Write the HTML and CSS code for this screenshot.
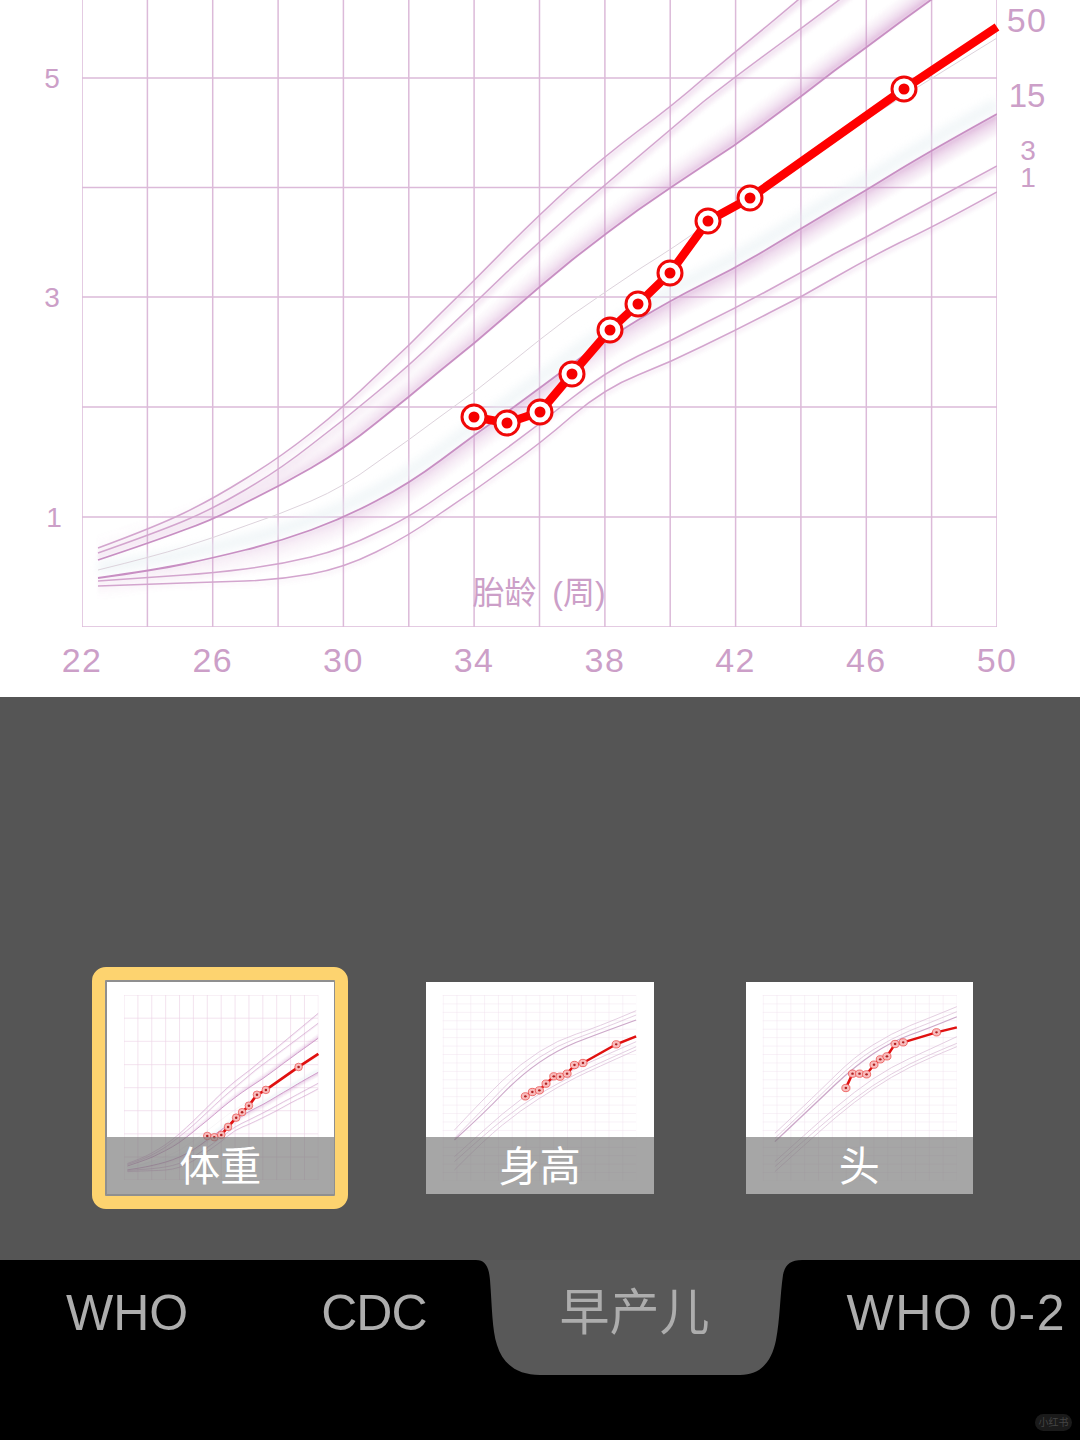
FILE: index.html
```html
<!DOCTYPE html>
<html lang="zh">
<head>
<meta charset="utf-8">
<title>早产儿 生长曲线</title>
<link rel="stylesheet" href="styles.css">
</head>
<body>
<main class="page">
  <svg class="chart" viewBox="0 0 1080 697" aria-label="体重曲线">
    <defs>
      <filter id="soft" x="-20%" y="-20%" width="140%" height="140%"><feGaussianBlur stdDeviation="5"/></filter>
      <filter id="soft2" x="-5%" y="-5%" width="110%" height="110%"><feGaussianBlur stdDeviation="1.2"/></filter>
      <linearGradient id="fade" gradientUnits="userSpaceOnUse" x1="98" y1="0" x2="997" y2="0">
        <stop offset="0" stop-color="#cf94ca" stop-opacity=".22"/>
        <stop offset=".45" stop-color="#cf94ca" stop-opacity=".7"/>
        <stop offset="1" stop-color="#cb8cc6" stop-opacity="1"/>
      </linearGradient>
      <clipPath id="plot"><rect x="82" y="-253" width="915" height="880"/></clipPath>
      <path id="pa" d="M98 548 Q155 527 184 513 Q213 499 245 479 Q278 459 311 433 Q344 407 376 376 Q409 346 441 313 Q474 281 507 247 Q540 214 572 185 Q605 156 638 131 Q671 107 703 79 Q736 51 767 26 Q798 0 897 -83 L997 -167"/>
      <path id="pb" d="M98 553 Q155 533 184 521 Q213 509 245 490 Q278 471 311 445 Q344 420 376 393 Q409 366 441 335 Q474 304 507 272 Q540 241 572 213 Q605 185 638 157 Q671 129 703 102 Q736 76 788 38 Q840 0 997 -120"/>
      <path id="pc" d="M98 560 Q155 541 184 530 Q213 520 245 503 Q278 487 311 468 Q344 449 376 423 Q409 397 441 370 Q474 344 507 315 Q540 286 572 260 Q605 234 638 210 Q671 187 703 166 Q736 145 769 120 Q802 96 834 71 Q867 47 899 23 Q931 0 997 -48"/>
      <path id="pm" d="M98 570 Q155 556 184 547 Q213 538 245 526 Q278 515 311 501 Q344 487 376 463 Q409 440 441 416 Q474 393 507 366 Q540 339 572 315 Q605 292 641 268 Q678 245 707 224 Q736 204 820 149 Q904 95 997 38"/>
      <path id="pd" d="M98 578 Q155 570 184 564 Q213 558 245 550 Q278 542 311 530 Q344 518 376 501 Q409 484 441 460 Q474 435 507 412 Q540 388 572 364 Q605 340 638 320 Q671 300 703 284 Q736 268 769 248 Q802 228 834 209 Q867 190 899 170 Q932 150 997 114"/>
      <path id="pe" d="M98 581 Q155 577 184 575 Q213 573 245 569 Q278 565 311 557 Q344 549 376 533 Q409 518 441 495 Q474 473 507 448 Q540 424 572 398 Q605 372 638 356 Q671 341 703 324 Q736 308 769 290 Q802 272 834 254 Q867 237 899 219 Q932 201 997 166"/>
      <path id="pf" d="M98 586 Q155 584 184 583 Q213 582 245 581 Q278 580 311 574 Q344 568 376 552 Q409 536 441 513 Q474 491 507 467 Q540 444 572 416 Q605 388 638 375 Q671 362 703 346 Q736 330 769 313 Q802 297 834 278 Q867 259 899 243 Q932 228 997 192"/>
      <g id="curves" clip-path="url(#plot)">
        <path class="grid" d="M82 -253V627M147.4 -253V627M212.7 -253V627M278.1 -253V627M343.4 -253V627M408.8 -253V627M474.1 -253V627M539.5 -253V627M604.9 -253V627M670.2 -253V627M735.6 -253V627M800.9 -253V627M866.3 -253V627M931.6 -253V627M997 -253V627"/>
        <path class="grid" d="M82 -253H997M82 -143H997M82 -33H997M82 78H997M82 187.5H997M82 297H997M82 407H997M82 517H997M82 627H997"/>
        <use href="#pd" class="shade-pale"/>
        <g class="band" stroke="url(#fade)" filter="url(#soft2)">
          <use href="#pc" transform="translate(0 -2)" opacity=".5"/>
          <use href="#pc" transform="translate(0 -5)" opacity=".38"/>
          <use href="#pc" transform="translate(0 -8)" opacity=".29"/>
          <use href="#pc" transform="translate(0 -11)" opacity=".22"/>
          <use href="#pc" transform="translate(0 -14)" opacity=".16"/>
          <use href="#pc" transform="translate(0 -17)" opacity=".11"/>
          <use href="#pc" transform="translate(0 -20)" opacity=".07"/>
          <use href="#pc" transform="translate(0 -23)" opacity=".04"/>
          <use href="#pd" transform="translate(0 2)" opacity=".5"/>
          <use href="#pd" transform="translate(0 5)" opacity=".38"/>
          <use href="#pd" transform="translate(0 8)" opacity=".29"/>
          <use href="#pd" transform="translate(0 11)" opacity=".22"/>
          <use href="#pd" transform="translate(0 14)" opacity=".16"/>
          <use href="#pd" transform="translate(0 17)" opacity=".11"/>
          <use href="#pd" transform="translate(0 20)" opacity=".06"/>
          <use href="#pa" transform="translate(0 2)" opacity=".24"/>
          <use href="#pa" transform="translate(0 5)" opacity=".16"/>
          <use href="#pa" transform="translate(0 8)" opacity=".09"/>
          <use href="#pb" transform="translate(0 2)" opacity=".24"/>
          <use href="#pb" transform="translate(0 5)" opacity=".16"/>
          <use href="#pb" transform="translate(0 8)" opacity=".09"/>
          <use href="#pe" transform="translate(0 2)" opacity=".18"/>
          <use href="#pe" transform="translate(0 5)" opacity=".1"/>
          <use href="#pf" transform="translate(0 2)" opacity=".14"/>
          <use href="#pf" transform="translate(0 5)" opacity=".07"/>
        </g>
        <use href="#pm" class="thin"/>
        <use href="#pa" class="curve"/>
        <use href="#pb" class="curve"/>
        <use href="#pc" class="curve curve-bold"/>
        <use href="#pd" class="curve curve-bold"/>
        <use href="#pe" class="curve"/>
        <use href="#pf" class="curve"/>
      </g>
      <g id="node">
        <circle class="node-ring" r="12"/>
        <circle class="node-dot" r="5.5"/>
      </g>
      <g id="thumb-node">
        <circle class="tn-ring" r="18"/>
        <circle class="tn-dot" r="6"/>
      </g>
      <g id="mini-node">
        <circle class="mn-ring" r="11"/>
        <circle class="mn-dot" r="3.5"/>
      </g>
      <pattern id="fine" patternUnits="userSpaceOnUse" width="37.43" height="25.3" x="88" y="75">
        <path class="fine-line" d="M0 0H37.43M0 0V25.3"/>
      </pattern>
      <pattern id="fine2" patternUnits="userSpaceOnUse" width="37.43" height="25.3" x="952" y="75">
        <path class="fine-line" d="M0 0H37.43M0 0V25.3"/>
      </pattern>
    </defs>

    <use href="#curves"/>
    <polyline class="red" points="474,417 507,423 540,412 572,374 610,330 638,304 670,273 708,221 750,198 904,89 997,27"/>
    <use href="#node" x="474" y="417"/>
    <use href="#node" x="507" y="423"/>
    <use href="#node" x="540" y="412"/>
    <use href="#node" x="572" y="374"/>
    <use href="#node" x="610" y="330"/>
    <use href="#node" x="638" y="304"/>
    <use href="#node" x="670" y="273"/>
    <use href="#node" x="708" y="221"/>
    <use href="#node" x="750" y="198"/>
    <use href="#node" x="904" y="89"/>

    <text class="lbl lbl-y" x="52" y="88">5</text>
    <text class="lbl lbl-y" x="52" y="307">3</text>
    <text class="lbl lbl-y" x="54" y="527">1</text>
    <text class="lbl lbl-x" x="82" y="672">22</text>
    <text class="lbl lbl-x" x="212.7" y="672">26</text>
    <text class="lbl lbl-x" x="343.4" y="672">30</text>
    <text class="lbl lbl-x" x="474.1" y="672">34</text>
    <text class="lbl lbl-x" x="604.9" y="672">38</text>
    <text class="lbl lbl-x" x="735.6" y="672">42</text>
    <text class="lbl lbl-x" x="866.3" y="672">46</text>
    <text class="lbl lbl-x" x="997" y="672">50</text>
    <text class="lbl lbl-x" x="1027" y="32">50</text>
    <text class="lbl lbl-r" x="1027" y="107">15</text>
    <text class="lbl lbl-s" x="1028" y="160">3</text>
    <text class="lbl lbl-s" x="1028" y="187">1</text>
    <text class="lbl lbl-t" x="539" y="604">胎龄 (周)</text>
  </svg>

  <section class="thumbs">
    <figure class="thumb thumb-on">
      <svg class="thumb-art" viewBox="2 -315 1071 1008" preserveAspectRatio="none">
        <use href="#curves"/>
        <polyline class="tn-red" points="474,417 507,423 540,412 572,374 610,330 638,304 670,273 708,221 750,198 904,89 997,27"/>
        <use href="#thumb-node" x="474" y="417"/>
        <use href="#thumb-node" x="507" y="423"/>
        <use href="#thumb-node" x="540" y="412"/>
        <use href="#thumb-node" x="572" y="374"/>
        <use href="#thumb-node" x="610" y="330"/>
        <use href="#thumb-node" x="638" y="304"/>
        <use href="#thumb-node" x="670" y="273"/>
        <use href="#thumb-node" x="708" y="221"/>
        <use href="#thumb-node" x="750" y="198"/>
        <use href="#thumb-node" x="904" y="89"/>
      </svg>
      <figcaption class="thumb-cap">体重</figcaption>
    </figure>

    <figure class="thumb">
      <svg class="thumb-art" viewBox="43 36 616 636" preserveAspectRatio="none">
        <rect x="88" y="75" width="524" height="557" fill="url(#fine)"/>
        <path class="mini" d="M120 480 Q200 385 250 332 Q300 280 350 245 Q400 210 450 192 Q500 175 612 122"/>
        <path class="mini" d="M120 505 Q200 415 250 357 Q300 300 350 262 Q400 225 450 205 Q500 185 612 135"/>
        <path class="mini mini-bold" d="M120 510 Q200 430 250 372 Q300 315 350 277 Q400 240 450 217 Q500 195 612 150"/>
        <path class="mini" d="M120 560 Q200 480 250 432 Q300 385 350 352 Q400 320 450 295 Q500 270 612 215"/>
        <path class="mini" d="M120 575 Q200 495 250 450 Q300 405 350 372 Q400 340 450 312 Q500 285 612 230"/>
        <path class="mini" d="M120 600 Q200 510 250 465 Q300 420 350 385 Q400 350 450 322 Q500 295 612 240"/>
        <polyline class="mn-red" points="312,379 331,366 350,361 368,341 389,319 406,320 425,311 445,285 468,279 558,223 612,199"/>
        <use href="#mini-node" x="312" y="379"/>
        <use href="#mini-node" x="331" y="366"/>
        <use href="#mini-node" x="350" y="361"/>
        <use href="#mini-node" x="368" y="341"/>
        <use href="#mini-node" x="389" y="319"/>
        <use href="#mini-node" x="406" y="320"/>
        <use href="#mini-node" x="425" y="311"/>
        <use href="#mini-node" x="445" y="285"/>
        <use href="#mini-node" x="468" y="279"/>
        <use href="#mini-node" x="558" y="223"/>
      </svg>
      <figcaption class="thumb-cap">身高</figcaption>
    </figure>

    <figure class="thumb">
      <svg class="thumb-art" viewBox="907 36 615 636" preserveAspectRatio="none">
        <rect x="952" y="75" width="525" height="557" fill="url(#fine2)"/>
        <path class="mini" d="M985 490 Q1100 370 1150 315 Q1200 260 1250 225 Q1300 190 1350 167 Q1400 145 1477 110"/>
        <path class="mini" d="M985 505 Q1100 385 1150 330 Q1200 275 1250 240 Q1300 205 1350 182 Q1400 160 1477 125"/>
        <path class="mini mini-bold" d="M985 515 Q1100 395 1150 342 Q1200 290 1250 252 Q1300 215 1350 195 Q1400 175 1477 140"/>
        <path class="mini" d="M985 575 Q1100 460 1150 412 Q1200 365 1250 327 Q1300 290 1350 265 Q1400 240 1477 200"/>
        <path class="mini" d="M985 590 Q1100 475 1150 430 Q1200 385 1250 347 Q1300 310 1350 282 Q1400 255 1477 220"/>
        <path class="mini" d="M985 605 Q1100 490 1150 442 Q1200 395 1250 357 Q1300 320 1350 292 Q1400 265 1477 230"/>
        <polyline class="mn-red" points="1177,354 1195,311 1214,311 1233,313 1253,284 1270,268 1288,259 1310,222 1332,217 1422,187 1477,172"/>
        <use href="#mini-node" x="1177" y="354"/>
        <use href="#mini-node" x="1195" y="311"/>
        <use href="#mini-node" x="1214" y="311"/>
        <use href="#mini-node" x="1233" y="313"/>
        <use href="#mini-node" x="1253" y="284"/>
        <use href="#mini-node" x="1270" y="268"/>
        <use href="#mini-node" x="1288" y="259"/>
        <use href="#mini-node" x="1310" y="222"/>
        <use href="#mini-node" x="1332" y="217"/>
        <use href="#mini-node" x="1422" y="187"/>
      </svg>
      <figcaption class="thumb-cap">头</figcaption>
    </figure>
  </section>

  <nav class="tabs">
    <svg class="notch" viewBox="0 0 1080 120" aria-hidden="true">
      <path class="notch-fill" d="M476 0 C486 0 489 8 490 20 C492 45 492 70 497 85 C503 105 518 115 540 115 H740 C762 115 772 100 776 80 C780 60 780 35 783 15 C785 5 790 0 802 0 Z"/>
    </svg>
    <span class="tab">WHO</span>
    <span class="tab tab-tight">CDC</span>
    <span class="tab">早产儿</span>
    <span class="tab tab-wide">WHO 0-2</span>
    <span class="mark">小红书</span>
  </nav>
</main>
</body>
</html>
```

FILE: styles.css
```css
* { box-sizing: border-box; }

html, body {
  margin: 0;
  background: #555555;
}

.page {
  width: 1080px;
  height: 1440px;
  overflow: hidden;
  display: flex;
  flex-direction: column;
  font-family: "Liberation Sans", "Noto Sans CJK SC", sans-serif;
}

/* main chart */
.chart {
  display: block;
  width: 1080px;
  height: 697px;
  flex: none;
  background: #ffffff;
}

.grid { fill: none; stroke: var(--grid-c, #dcbad9); stroke-width: var(--grid-w, 1.5); }
.curve { fill: none; stroke: #d3a5ce; stroke-width: var(--curve-w, 1.5); }
.curve-bold { stroke: #c88fc3; stroke-width: var(--curve-b, 1.8); }
.thin { fill: none; stroke: #ddd3dc; stroke-width: 1; }
.band { fill: none; stroke-width: 3.2; }
.shade-pale { fill: none; stroke: #e6eff3; stroke-width: 12; opacity: .55; filter: url(#soft); transform: translate(0, -10px); }

.red {
  fill: none;
  stroke: #ff0000;
  stroke-width: 8.5;
  stroke-linejoin: round;
}

.node-ring { fill: #ffffff; stroke: #f00808; stroke-width: 3; }
.node-dot { fill: #f50000; }

.lbl { fill: #cc9fc8; text-anchor: middle; }
.lbl-x { font-size: 34px; letter-spacing: 1.4px; }
.lbl-r { font-size: 33px; }
.lbl-y { font-size: 28px; }
.lbl-s { font-size: 28px; }
.lbl-t { font-size: 32px; word-spacing: 7px; }

/* thumbnails */
.thumbs {
  flex: none;
  height: 563px;
  padding: 285px 0 0 106.5px;
  display: flex;
  align-items: flex-start;
  gap: 92px;
}

.thumb {
  position: relative;
  width: 227.5px;
  height: 212px;
  margin: 0;
  background: #ffffff;
}

.thumb-on {
  --grid-c: #ecd3e6;
  --grid-w: 3;
  --curve-w: 3;
  --curve-b: 4;
  box-shadow: 0 0 0 2px #8f8f8f;
}

.thumb-on::after {
  content: "";
  position: absolute;
  inset: -15px -14px -15px -15px;
  border: 13px solid #fdd36f;
  border-radius: 14px;
}

.thumb-art {
  display: block;
  width: 100%;
  height: 100%;
}

.thumb-cap {
  position: absolute;
  left: 0;
  right: 0;
  bottom: 0;
  height: 57px;
  padding-top: 2px;
  line-height: 57px;
  text-align: center;
  font-size: 41px;
  color: #ffffff;
  background: rgba(120, 120, 120, .66);
}

.tn-red { fill: none; stroke: #e01010; stroke-width: 13; }
.tn-ring { fill: #f8bcbc; stroke: #e8403f; stroke-width: 3; }
.tn-dot { fill: #b02020; }

.fine-line { fill: none; stroke: #eddbeb; stroke-width: 2.2; }
.mini { fill: none; stroke: #dfc6dc; stroke-width: 2.4; }
.mini-bold { stroke: #cda9ca; stroke-width: 3.4; }
.mn-red { fill: none; stroke: #e01010; stroke-width: 7; }
.mn-ring { fill: #f8bcbc; stroke: #e8403f; stroke-width: 2; }
.mn-dot { fill: #b02020; }

/* bottom tabs */
.tabs {
  position: relative;
  flex: none;
  height: 180px;
  background: #000000;
  padding: 0 0 0 66px;
  display: flex;
  gap: 133px;
  align-items: flex-start;
}

.notch {
  position: absolute;
  left: 0;
  top: 0;
  width: 1080px;
  height: 120px;
}

.notch-fill { fill: #585858; }

.tab {
  position: relative;
  margin-top: 24px;
  font-size: 50px;
  line-height: 58px;
  color: #adadad;
  white-space: nowrap;
}

.tab-tight { letter-spacing: -1px; }
.tab-wide { margin-left: 4px; letter-spacing: 1.6px; }

.mark {
  position: absolute;
  left: 1035px;
  top: 154px;
  width: 37px;
  height: 17px;
  border-radius: 9px;
  background: #1a1a1a;
  color: #444444;
  font-size: 10px;
  line-height: 17px;
  text-align: center;
}
```
